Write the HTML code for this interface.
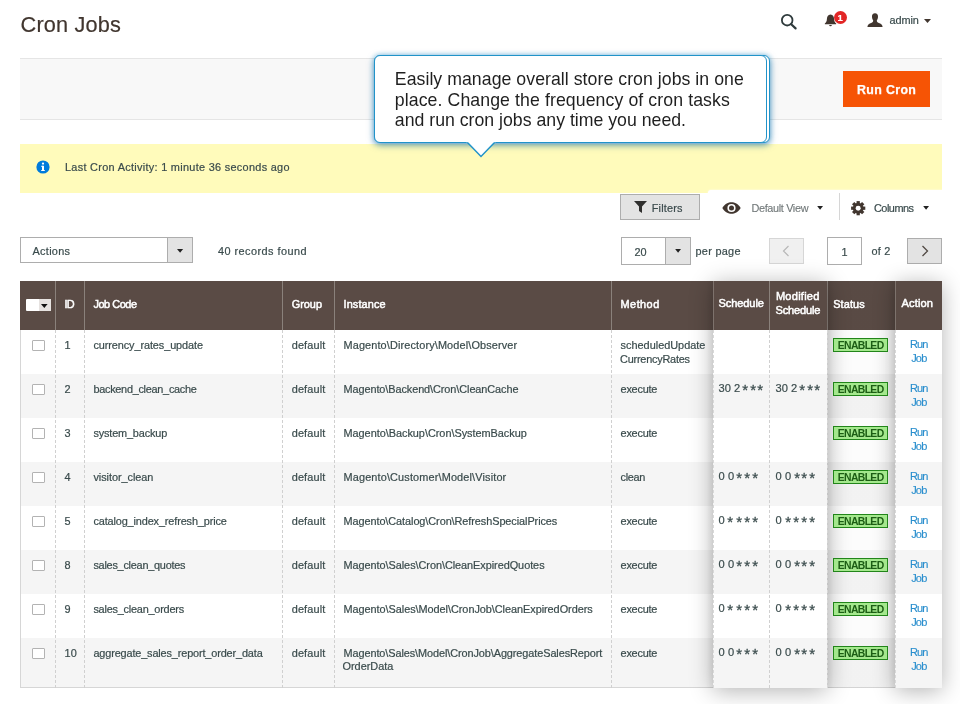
<!DOCTYPE html>
<html><head><meta charset="utf-8"><title>Cron Jobs</title>
<style>
*{box-sizing:border-box;margin:0;padding:0}
html,body{width:960px;height:704px;overflow:hidden;background:#fff}
body{font-family:"Liberation Sans",sans-serif;color:#46595a;position:relative;font-size:12px}
#wrap{position:absolute;left:0;top:0;width:960px;height:704px;will-change:transform}
.abs{position:absolute}
.t{position:absolute;white-space:nowrap;line-height:0;height:0;display:block;transform:translateY(-0.3465em)}
.b{font-size:10.9px;color:#3a4b4c;-webkit-text-stroke-width:0.2px}
.h{font-size:10.9px;color:#fff;-webkit-text-stroke:0.5px #fff}
.hz{font-size:11.1px;color:#fff;-webkit-text-stroke:0.5px #fff}
.l{font-size:11px;color:#2b8fce;-webkit-text-stroke-width:0.15px}
.e{font-size:10.4px;color:#1c5e14;font-weight:bold}
.tip{font-size:17.7px;color:#1f1f1f}
svg{position:absolute;overflow:visible}
.as{font-style:normal;display:inline-block;transform:translateY(0.1em) scale(1.35);transform-origin:50% 50%}
</style></head><body><div id="wrap">
<span class="t b" id="title" style="left:20.6px;top:33px;letter-spacing:0.182px;font-size:21.7px;color:#41362f;">Cron Jobs</span>
<svg style="left:779px;top:11px" width="20" height="20" viewBox="0 0 20 20"><circle cx="8.2" cy="9.2" r="5.3" fill="none" stroke="#2e3a3c" stroke-width="1.8"/><path d="M12.2 13.2 L16.6 17.4" stroke="#2e3a3c" stroke-width="2.2" stroke-linecap="round"/></svg>
<svg style="left:823.6px;top:14.4px" width="13" height="13" viewBox="0 0 14 14"><path d="M7 0.6 C4.2 0.8 3.2 3.2 3.1 5.6 C3 8 2.2 9.2 0.9 10.2 L0.9 11 L13.1 11 L13.1 10.2 C11.8 9.2 11 8 10.9 5.6 C10.8 3.2 9.8 0.8 7 0.6 Z" fill="#41362f"/><path d="M5.6 11.8 a1.4 1.4 0 0 0 2.8 0 Z" fill="#41362f"/></svg>
<div class="abs" style="left:833.5px;top:11.2px;width:13px;height:13px;border-radius:50%;background:#e22626"></div>
<span class="t b" id="badge" style="left:837.6px;top:21.2px;font-size:9.5px;font-weight:bold;color:#fff;">1</span>
<svg style="left:866.5px;top:12.8px" width="16" height="14.3" viewBox="0 0 17 15"><path d="M8.5 0.3 C6.3 0.3 5.2 1.9 5.3 4 C5.4 6 6 7.2 6.6 8 C6.6 9.4 6 9.9 4.4 10.5 C2.4 11.2 0.8 11.6 0.4 14.7 L16.6 14.7 C16.2 11.6 14.6 11.2 12.6 10.5 C11 9.9 10.4 9.4 10.4 8 C11 7.2 11.6 6 11.7 4 C11.8 1.9 10.7 0.3 8.5 0.3 Z" fill="#41362f"/></svg>
<span class="t b" id="admin" style="left:889.5px;top:24.2px;letter-spacing:-0.068px;">admin</span>
<svg style="left:924px;top:18.6px" width="7" height="4.4" viewBox="0 0 8 5"><path d="M0 0 L8 0 L4 4.6 Z" fill="#41362f"/></svg>
<div class="abs" style="left:20px;top:58px;width:921.6px;height:62px;background:#f8f8f8;border-top:1px solid #e5e5e5;border-bottom:1px solid #e5e5e5"></div>
<div class="abs" style="left:843px;top:71px;width:87px;height:35.5px;background:#f65405"></div>
<span class="t b" id="runcron" style="left:857px;top:94px;letter-spacing:0.352px;font-size:12.4px;font-weight:bold;color:#fff;-webkit-text-stroke:0.25px #fff;">Run Cron</span>
<div class="abs" style="left:20px;top:143.5px;width:921.6px;height:49.7px;background:#fffbbb"></div>
<svg style="left:36px;top:160px" width="14" height="14" viewBox="0 0 14 14"><circle cx="7" cy="7" r="6.6" fill="#007bdb"/><rect x="6" y="5.8" width="2" height="5" fill="#fff"/><rect x="5.2" y="5.8" width="2" height="1" fill="#fff"/><rect x="5.2" y="10" width="3.6" height="1" fill="#fff"/><circle cx="7" cy="3.6" r="1.15" fill="#fff"/></svg>
<span class="t b" id="lastcron" style="left:65px;top:171.3px;letter-spacing:0.300px;">Last Cron Activity: 1 minute 36 seconds ago</span>
<div class="abs" style="left:374px;top:55px;width:395.8px;height:88px;background:#fff;border:1.5px solid #2193c9;border-radius:6px;box-shadow:0 2px 7px rgba(10,95,150,.6),0 0 5px rgba(60,170,230,.45)"></div>
<div class="abs" style="left:374px;top:55px;width:392.8px;height:88px;background:#fff;border:1.5px solid #2193c9;border-radius:6px"></div>
<svg style="left:462px;top:140px" width="40" height="20" viewBox="0 0 40 20"><path d="M5 2 L19 16.5 L33 2" fill="#fff" stroke="#2193c9" stroke-width="1.5"/><rect x="4" y="0" width="30" height="2.2" fill="#fff"/></svg>
<span class="t tip" id="tip1" style="left:394.8px;top:84.8px;letter-spacing:0.045px;">Easily manage overall store cron jobs in one</span>
<span class="t tip" id="tip2" style="left:394.8px;top:105.6px;letter-spacing:0.091px;">place. Change the frequency of cron tasks</span>
<span class="t tip" id="tip3" style="left:394.8px;top:126.4px;letter-spacing:0.004px;">and run cron jobs any time you need.</span>
<div class="abs" style="left:708px;top:190px;width:236px;height:34px;background:#fff;border-top-left-radius:3px;box-shadow:0 0 2px rgba(255,255,255,.9)"></div>
<div class="abs" style="left:620px;top:194px;width:80px;height:26px;background:#e3e3e3;border:1px solid #adadad"></div>
<svg style="left:634px;top:201px" width="13" height="12" viewBox="0 0 13 12"><path d="M0 0 L13 0 L8 5.6 L8 12 L5 10 L5 5.6 Z" fill="#302f2e"/></svg>
<span class="t b" id="filters" style="left:651.7px;top:212px;letter-spacing:0.191px;color:#3b4a4c;">Filters</span>
<svg style="left:722px;top:201.5px" width="19" height="12" viewBox="0 0 19 12"><path d="M0.3 6 C3 1.6 6.2 0.3 9.5 0.3 C12.8 0.3 16 1.6 18.7 6 C16 10.4 12.8 11.7 9.5 11.7 C6.2 11.7 3 10.4 0.3 6 Z" fill="#41362f"/><circle cx="9.5" cy="6" r="4.1" fill="#fff"/><circle cx="9.5" cy="6" r="2.5" fill="#41362f"/></svg>
<span class="t b" id="defview" style="left:751.5px;top:212px;letter-spacing:-0.359px;color:#707778;-webkit-text-stroke-width:0.1px;">Default View</span>
<svg style="left:817px;top:206.3px" width="6.2" height="4.2" viewBox="0 0 7 5"><path d="M0 0 L7 0 L3.5 4.4 Z" fill="#222"/></svg>
<div class="abs" style="left:839px;top:193px;width:1px;height:27px;background:#d6d6d6"></div>
<svg style="left:851.3px;top:200.8px" width="14.4" height="14.4" viewBox="-7.5 -7.5 15 15"><g fill="#41362f"><rect x="-1.7" y="-7.4" width="3.4" height="4" transform="rotate(0)"/><rect x="-1.7" y="-7.4" width="3.4" height="4" transform="rotate(45)"/><rect x="-1.7" y="-7.4" width="3.4" height="4" transform="rotate(90)"/><rect x="-1.7" y="-7.4" width="3.4" height="4" transform="rotate(135)"/><rect x="-1.7" y="-7.4" width="3.4" height="4" transform="rotate(180)"/><rect x="-1.7" y="-7.4" width="3.4" height="4" transform="rotate(225)"/><rect x="-1.7" y="-7.4" width="3.4" height="4" transform="rotate(270)"/><rect x="-1.7" y="-7.4" width="3.4" height="4" transform="rotate(315)"/><circle r="5.6"/></g><circle r="2.6" fill="#fff"/></svg>
<span class="t b" id="columns" style="left:874px;top:212px;letter-spacing:-0.497px;">Columns</span>
<svg style="left:922.5px;top:206.3px" width="6.2" height="4.2" viewBox="0 0 7 5"><path d="M0 0 L7 0 L3.5 4.4 Z" fill="#222"/></svg>
<div class="abs" style="left:20px;top:237px;width:173px;height:26px;background:#fff;border:1px solid #adadad"></div>
<div class="abs" style="left:167px;top:238px;width:25px;height:24px;background:#e3e3e3;border-left:1px solid #adadad"></div>
<svg style="left:177px;top:248.7px" width="6.2" height="4.4" viewBox="0 0 7 5"><path d="M0 0 L7 0 L3.5 4.4 Z" fill="#222"/></svg>
<span class="t b" id="actions" style="left:32.5px;top:255px;letter-spacing:0.297px;">Actions</span>
<span class="t b" id="records" style="left:218px;top:255px;letter-spacing:0.451px;">40 records found</span>
<div class="abs" style="left:621px;top:237px;width:70px;height:28px;background:#fff;border:1px solid #adadad"></div>
<div class="abs" style="left:665px;top:238px;width:25px;height:26px;background:#e3e3e3;border-left:1px solid #adadad"></div>
<svg style="left:675px;top:248.8px" width="6.2" height="4.2" viewBox="0 0 7 5"><path d="M0 0 L7 0 L3.5 4.4 Z" fill="#222"/></svg>
<span class="t b" id="pp20" style="left:634.5px;top:256px;">20</span>
<span class="t b" id="perpage" style="left:695.5px;top:255px;letter-spacing:0.286px;">per page</span>
<div class="abs" style="left:769px;top:238px;width:35px;height:26px;background:#f0f0f0;border:1px solid #d6d6d6"></div>
<svg style="left:781px;top:245px" width="10" height="12" viewBox="0 0 10 12"><path d="M7.5 1 L2.5 6 L7.5 11" fill="none" stroke="#b8b8b8" stroke-width="1.2"/></svg>
<div class="abs" style="left:827px;top:237px;width:35px;height:28px;background:#fff;border:1px solid #adadad"></div>
<span class="t b" id="pg1" style="left:841.5px;top:256px;">1</span>
<span class="t b" id="of2" style="left:871.5px;top:255px;letter-spacing:0.209px;">of 2</span>
<div class="abs" style="left:907px;top:238px;width:35px;height:26px;background:#e3e3e3;border:1px solid #adadad"></div>
<svg style="left:920px;top:245px" width="10" height="12" viewBox="0 0 10 12"><path d="M2.5 1 L7.5 6 L2.5 11" fill="none" stroke="#514943" stroke-width="1.3"/></svg>
<div class="abs" style="left:20px;top:281px;width:921.6px;height:48.5px;background:#5a4b45"></div>
<div class="abs" style="left:20px;top:329.5px;width:921.6px;height:44.0px;background:#fff"></div>
<div class="abs" style="left:20px;top:373.5px;width:921.6px;height:44.0px;background:#f5f5f5"></div>
<div class="abs" style="left:20px;top:417.5px;width:921.6px;height:44.0px;background:#fff"></div>
<div class="abs" style="left:20px;top:461.5px;width:921.6px;height:44.0px;background:#f5f5f5"></div>
<div class="abs" style="left:20px;top:505.5px;width:921.6px;height:44.0px;background:#fff"></div>
<div class="abs" style="left:20px;top:549.5px;width:921.6px;height:44.0px;background:#f5f5f5"></div>
<div class="abs" style="left:20px;top:593.5px;width:921.6px;height:44.0px;background:#fff"></div>
<div class="abs" style="left:20px;top:637.5px;width:921.6px;height:50.5px;background:#f5f5f5"></div>
<div class="abs" style="left:20px;top:329.5px;width:1px;height:358.5px;background:#d6d6d6"></div>
<div class="abs" style="left:20px;top:687px;width:921.6px;height:1px;background:#d6d6d6"></div>
<div class="abs" style="left:827px;top:281px;width:68px;height:407px;background:linear-gradient(90deg,rgba(0,0,0,.07),rgba(0,0,0,.02) 10%,rgba(0,0,0,.01) 30%,rgba(0,0,0,.01) 70%,rgba(0,0,0,.02) 90%,rgba(0,0,0,.07))"></div>
<div class="abs" style="left:690px;top:281px;width:22.5px;height:407px;background:linear-gradient(90deg,rgba(0,0,0,0),rgba(0,0,0,.0) 70%,rgba(0,0,0,.05))"></div>
<div class="abs" style="left:55px;top:281px;width:1px;height:48.5px;background:#8a817b"></div>
<div class="abs" style="left:55px;top:329.5px;width:0;height:358.5px;border-left:1px dashed #d0d0d0"></div>
<div class="abs" style="left:84px;top:281px;width:1px;height:48.5px;background:#8a817b"></div>
<div class="abs" style="left:84px;top:329.5px;width:0;height:358.5px;border-left:1px dashed #d0d0d0"></div>
<div class="abs" style="left:282px;top:281px;width:1px;height:48.5px;background:#8a817b"></div>
<div class="abs" style="left:282px;top:329.5px;width:0;height:358.5px;border-left:1px dashed #d0d0d0"></div>
<div class="abs" style="left:334px;top:281px;width:1px;height:48.5px;background:#8a817b"></div>
<div class="abs" style="left:334px;top:329.5px;width:0;height:358.5px;border-left:1px dashed #d0d0d0"></div>
<div class="abs" style="left:611px;top:281px;width:1px;height:48.5px;background:#8a817b"></div>
<div class="abs" style="left:611px;top:329.5px;width:0;height:358.5px;border-left:1px dashed #d0d0d0"></div>
<div class="abs" style="left:712.5px;top:281px;width:1px;height:48.5px;background:#8a817b"></div>
<div class="abs" style="left:712.5px;top:329.5px;width:0;height:358.5px;border-left:1px dashed #d0d0d0"></div>
<div class="abs" style="left:769px;top:281px;width:1px;height:48.5px;background:#8a817b"></div>
<div class="abs" style="left:769px;top:329.5px;width:0;height:358.5px;border-left:1px dashed #d0d0d0"></div>
<div class="abs" style="left:827px;top:281px;width:1px;height:48.5px;background:#8a817b"></div>
<div class="abs" style="left:827px;top:329.5px;width:0;height:358.5px;border-left:1px dashed #d0d0d0"></div>
<div class="abs" style="left:894.5px;top:281px;width:1px;height:48.5px;background:#8a817b"></div>
<div class="abs" style="left:894.5px;top:329.5px;width:0;height:358.5px;border-left:1px dashed #d0d0d0"></div>
<div class="abs" style="left:712.5px;top:281px;width:114.5px;height:407px;box-shadow:0 3px 22px rgba(0,0,0,.30);background:#fff"></div>
<div class="abs" style="left:712.5px;top:281px;width:114.5px;height:48.5px;background:#5a4b45"></div>
<div class="abs" style="left:712.5px;top:329.5px;width:114.5px;height:44.0px;background:#fff"></div>
<div class="abs" style="left:712.5px;top:373.5px;width:114.5px;height:44.0px;background:#f5f5f5"></div>
<div class="abs" style="left:712.5px;top:417.5px;width:114.5px;height:44.0px;background:#fff"></div>
<div class="abs" style="left:712.5px;top:461.5px;width:114.5px;height:44.0px;background:#f5f5f5"></div>
<div class="abs" style="left:712.5px;top:505.5px;width:114.5px;height:44.0px;background:#fff"></div>
<div class="abs" style="left:712.5px;top:549.5px;width:114.5px;height:44.0px;background:#f5f5f5"></div>
<div class="abs" style="left:712.5px;top:593.5px;width:114.5px;height:44.0px;background:#fff"></div>
<div class="abs" style="left:712.5px;top:637.5px;width:114.5px;height:50.5px;background:#f5f5f5"></div>
<div class="abs" style="left:712.5px;top:281px;width:1px;height:48.5px;background:#7d726c"></div>
<div class="abs" style="left:769px;top:281px;width:1px;height:48.5px;background:#8a817b"></div>
<div class="abs" style="left:769px;top:329.5px;width:0;height:358.5px;border-left:1px dashed #d0d0d0"></div>
<div class="abs" style="left:894.5px;top:281px;width:47.10000000000002px;height:407px;box-shadow:0 3px 22px rgba(0,0,0,.30);background:#fff"></div>
<div class="abs" style="left:894.5px;top:281px;width:47.10000000000002px;height:48.5px;background:#5a4b45"></div>
<div class="abs" style="left:894.5px;top:329.5px;width:47.10000000000002px;height:44.0px;background:#fff"></div>
<div class="abs" style="left:894.5px;top:373.5px;width:47.10000000000002px;height:44.0px;background:#f5f5f5"></div>
<div class="abs" style="left:894.5px;top:417.5px;width:47.10000000000002px;height:44.0px;background:#fff"></div>
<div class="abs" style="left:894.5px;top:461.5px;width:47.10000000000002px;height:44.0px;background:#f5f5f5"></div>
<div class="abs" style="left:894.5px;top:505.5px;width:47.10000000000002px;height:44.0px;background:#fff"></div>
<div class="abs" style="left:894.5px;top:549.5px;width:47.10000000000002px;height:44.0px;background:#f5f5f5"></div>
<div class="abs" style="left:894.5px;top:593.5px;width:47.10000000000002px;height:44.0px;background:#fff"></div>
<div class="abs" style="left:894.5px;top:637.5px;width:47.10000000000002px;height:50.5px;background:#f5f5f5"></div>
<div class="abs" style="left:894.5px;top:281px;width:1px;height:48.5px;background:#7d726c"></div>
<div class="abs" style="left:712.5px;top:329.5px;width:0;height:358.5px;border-left:1px dashed #d8d8d8"></div>
<div class="abs" style="left:826.5px;top:329.5px;width:0;height:358.5px;border-left:1px dashed #d8d8d8"></div>
<div class="abs" style="left:894.5px;top:329.5px;width:0;height:358.5px;border-left:1px dashed #d8d8d8"></div>
<div class="abs" style="left:26px;top:299px;width:25px;height:12px;background:#fff;border-radius:1px"></div>
<div class="abs" style="left:38.5px;top:299px;width:12.5px;height:12px;background:#e6e2e0"></div>
<svg style="left:41.3px;top:304px" width="6.6" height="4" viewBox="0 0 7 4"><path d="M0 0 L7 0 L3.5 4 Z" fill="#111"/></svg>
<span class="t h" id="h_id" style="left:64.5px;top:308.3px;letter-spacing:-0.806px;">ID</span>
<span class="t h" id="h_job" style="left:93.4px;top:308.3px;letter-spacing:-0.432px;">Job Code</span>
<span class="t h" id="h_grp" style="left:291.7px;top:308.3px;letter-spacing:0.005px;">Group</span>
<span class="t h" id="h_ins" style="left:343.5px;top:308.3px;letter-spacing:0.118px;">Instance</span>
<span class="t h" id="h_met" style="left:620.6px;top:308.3px;letter-spacing:0.454px;">Method</span>
<span class="t hz" id="h_sch" style="left:718.5px;top:306.6px;letter-spacing:-0.124px;">Schedule</span>
<span class="t hz" id="h_mod1" style="left:775.9px;top:299.6px;letter-spacing:0.223px;">Modified</span>
<span class="t hz" id="h_mod2" style="left:775.5px;top:314.4px;letter-spacing:-0.181px;">Schedule</span>
<span class="t h" id="h_sta" style="left:833.2px;top:308.3px;letter-spacing:0.125px;">Status</span>
<span class="t hz" id="h_act" style="left:901.5px;top:306.6px;letter-spacing:0.131px;">Action</span>
<div class="abs" style="left:32px;top:339.5px;width:13px;height:11.5px;background:#fff;border:1px solid #b3b3b3;border-radius:1px"></div>
<span class="t b" id="r0_id" style="left:64.6px;top:349.2px;">1</span>
<span class="t b" id="r0_job" style="left:93.4px;top:349.2px;letter-spacing:-0.090px;">currency_rates_update</span>
<span class="t b" id="r0_grp" style="left:291.7px;top:349.2px;letter-spacing:0.149px;">default</span>
<span class="t b" id="r0_ins" style="left:343.5px;top:349.2px;letter-spacing:0.133px;">Magento\Directory\Model\Observer</span>
<span class="t b" id="r0_met" style="left:620.6px;top:349.2px;letter-spacing:0.001px;">scheduledUpdate</span>
<span class="t b" id="r0_met2" style="left:620px;top:363.2px;letter-spacing:-0.220px;">CurrencyRates</span>
<div class="abs" style="left:833px;top:338.2px;width:55px;height:13.6px;background:#a4e88d;border:1px solid #22851a"></div>
<span class="t e" id="r0_en" style="left:837.7px;top:349.5px;letter-spacing:-0.622px;">ENABLED</span>
<span class="t l" id="r0_run" style="left:910px;top:348.2px;letter-spacing:-0.844px;">Run</span>
<span class="t l" id="r0_jobl" style="left:911.2px;top:362.2px;letter-spacing:-0.825px;">Job</span>
<div class="abs" style="left:32px;top:383.5px;width:13px;height:11.5px;background:#fff;border:1px solid #b3b3b3;border-radius:1px"></div>
<span class="t b" id="r1_id" style="left:64.6px;top:393.2px;">2</span>
<span class="t b" id="r1_job" style="left:93.4px;top:393.2px;letter-spacing:-0.272px;">backend_clean_cache</span>
<span class="t b" id="r1_grp" style="left:291.7px;top:393.2px;letter-spacing:0.149px;">default</span>
<span class="t b" id="r1_ins" style="left:343.5px;top:393.2px;letter-spacing:-0.080px;">Magento\Backend\Cron\CleanCache</span>
<span class="t b" id="r1_met" style="left:620.6px;top:393.2px;letter-spacing:-0.243px;">execute</span>
<span class="t b" id="r1_s1" style="left:718.5px;top:392.2px;letter-spacing:0.043px;font-size:11.1px;">30 2 <i class="as">*</i> <i class="as">*</i> <i class="as">*</i></span>
<span class="t b" id="r1_s2" style="left:775.5px;top:392.2px;letter-spacing:0.043px;font-size:11.1px;">30 2 <i class="as">*</i> <i class="as">*</i> <i class="as">*</i></span>
<div class="abs" style="left:833px;top:382.2px;width:55px;height:13.6px;background:#a4e88d;border:1px solid #22851a"></div>
<span class="t e" id="r1_en" style="left:837.7px;top:393.5px;letter-spacing:-0.622px;">ENABLED</span>
<span class="t l" id="r1_run" style="left:910px;top:392.2px;letter-spacing:-0.844px;">Run</span>
<span class="t l" id="r1_jobl" style="left:911.2px;top:406.2px;letter-spacing:-0.825px;">Job</span>
<div class="abs" style="left:32px;top:427.5px;width:13px;height:11.5px;background:#fff;border:1px solid #b3b3b3;border-radius:1px"></div>
<span class="t b" id="r2_id" style="left:64.6px;top:437.2px;">3</span>
<span class="t b" id="r2_job" style="left:93.4px;top:437.2px;letter-spacing:-0.156px;">system_backup</span>
<span class="t b" id="r2_grp" style="left:291.7px;top:437.2px;letter-spacing:0.149px;">default</span>
<span class="t b" id="r2_ins" style="left:343.5px;top:437.2px;letter-spacing:-0.024px;">Magento\Backup\Cron\SystemBackup</span>
<span class="t b" id="r2_met" style="left:620.6px;top:437.2px;letter-spacing:-0.243px;">execute</span>
<div class="abs" style="left:833px;top:426.2px;width:55px;height:13.6px;background:#a4e88d;border:1px solid #22851a"></div>
<span class="t e" id="r2_en" style="left:837.7px;top:437.5px;letter-spacing:-0.622px;">ENABLED</span>
<span class="t l" id="r2_run" style="left:910px;top:436.2px;letter-spacing:-0.844px;">Run</span>
<span class="t l" id="r2_jobl" style="left:911.2px;top:450.2px;letter-spacing:-0.825px;">Job</span>
<div class="abs" style="left:32px;top:471.5px;width:13px;height:11.5px;background:#fff;border:1px solid #b3b3b3;border-radius:1px"></div>
<span class="t b" id="r3_id" style="left:64.6px;top:481.2px;">4</span>
<span class="t b" id="r3_job" style="left:93.4px;top:481.2px;letter-spacing:-0.046px;">visitor_clean</span>
<span class="t b" id="r3_grp" style="left:291.7px;top:481.2px;letter-spacing:0.149px;">default</span>
<span class="t b" id="r3_ins" style="left:343.5px;top:481.2px;letter-spacing:0.149px;">Magento\Customer\Model\Visitor</span>
<span class="t b" id="r3_met" style="left:620.6px;top:481.2px;letter-spacing:-0.337px;">clean</span>
<span class="t b" id="r3_s1" style="left:718.5px;top:480.2px;letter-spacing:0.107px;font-size:11.1px;">0 0 <i class="as">*</i> <i class="as">*</i> <i class="as">*</i></span>
<span class="t b" id="r3_s2" style="left:775.5px;top:480.2px;letter-spacing:0.157px;font-size:11.1px;">0 0 <i class="as">*</i> <i class="as">*</i> <i class="as">*</i></span>
<div class="abs" style="left:833px;top:470.2px;width:55px;height:13.6px;background:#a4e88d;border:1px solid #22851a"></div>
<span class="t e" id="r3_en" style="left:837.7px;top:481.5px;letter-spacing:-0.622px;">ENABLED</span>
<span class="t l" id="r3_run" style="left:910px;top:480.2px;letter-spacing:-0.844px;">Run</span>
<span class="t l" id="r3_jobl" style="left:911.2px;top:494.2px;letter-spacing:-0.825px;">Job</span>
<div class="abs" style="left:32px;top:515.5px;width:13px;height:11.5px;background:#fff;border:1px solid #b3b3b3;border-radius:1px"></div>
<span class="t b" id="r4_id" style="left:64.6px;top:525.2px;">5</span>
<span class="t b" id="r4_job" style="left:93.4px;top:525.2px;letter-spacing:-0.128px;">catalog_index_refresh_price</span>
<span class="t b" id="r4_grp" style="left:291.7px;top:525.2px;letter-spacing:0.149px;">default</span>
<span class="t b" id="r4_ins" style="left:343.5px;top:525.2px;letter-spacing:-0.073px;">Magento\Catalog\Cron\RefreshSpecialPrices</span>
<span class="t b" id="r4_met" style="left:620.6px;top:525.2px;letter-spacing:-0.243px;">execute</span>
<span class="t b" id="r4_s1" style="left:718.5px;top:524.2px;letter-spacing:0.335px;font-size:11.1px;">0 <i class="as">*</i> <i class="as">*</i> <i class="as">*</i> <i class="as">*</i></span>
<span class="t b" id="r4_s2" style="left:775.5px;top:524.2px;letter-spacing:0.385px;font-size:11.1px;">0 <i class="as">*</i> <i class="as">*</i> <i class="as">*</i> <i class="as">*</i></span>
<div class="abs" style="left:833px;top:514.2px;width:55px;height:13.6px;background:#a4e88d;border:1px solid #22851a"></div>
<span class="t e" id="r4_en" style="left:837.7px;top:525.5px;letter-spacing:-0.622px;">ENABLED</span>
<span class="t l" id="r4_run" style="left:910px;top:524.2px;letter-spacing:-0.844px;">Run</span>
<span class="t l" id="r4_jobl" style="left:911.2px;top:538.2px;letter-spacing:-0.825px;">Job</span>
<div class="abs" style="left:32px;top:559.5px;width:13px;height:11.5px;background:#fff;border:1px solid #b3b3b3;border-radius:1px"></div>
<span class="t b" id="r5_id" style="left:64.6px;top:569.2px;">8</span>
<span class="t b" id="r5_job" style="left:93.4px;top:569.2px;letter-spacing:-0.246px;">sales_clean_quotes</span>
<span class="t b" id="r5_grp" style="left:291.7px;top:569.2px;letter-spacing:0.149px;">default</span>
<span class="t b" id="r5_ins" style="left:343.5px;top:569.2px;letter-spacing:-0.048px;">Magento\Sales\Cron\CleanExpiredQuotes</span>
<span class="t b" id="r5_met" style="left:620.6px;top:569.2px;letter-spacing:-0.243px;">execute</span>
<span class="t b" id="r5_s1" style="left:718.5px;top:568.2px;letter-spacing:0.107px;font-size:11.1px;">0 0 <i class="as">*</i> <i class="as">*</i> <i class="as">*</i></span>
<span class="t b" id="r5_s2" style="left:775.5px;top:568.2px;letter-spacing:0.157px;font-size:11.1px;">0 0 <i class="as">*</i> <i class="as">*</i> <i class="as">*</i></span>
<div class="abs" style="left:833px;top:558.2px;width:55px;height:13.6px;background:#a4e88d;border:1px solid #22851a"></div>
<span class="t e" id="r5_en" style="left:837.7px;top:569.5px;letter-spacing:-0.622px;">ENABLED</span>
<span class="t l" id="r5_run" style="left:910px;top:568.2px;letter-spacing:-0.844px;">Run</span>
<span class="t l" id="r5_jobl" style="left:911.2px;top:582.2px;letter-spacing:-0.825px;">Job</span>
<div class="abs" style="left:32px;top:603.5px;width:13px;height:11.5px;background:#fff;border:1px solid #b3b3b3;border-radius:1px"></div>
<span class="t b" id="r6_id" style="left:64.6px;top:613.2px;">9</span>
<span class="t b" id="r6_job" style="left:93.4px;top:613.2px;letter-spacing:-0.221px;">sales_clean_orders</span>
<span class="t b" id="r6_grp" style="left:291.7px;top:613.2px;letter-spacing:0.149px;">default</span>
<span class="t b" id="r6_ins" style="left:343.5px;top:613.2px;letter-spacing:-0.045px;">Magento\Sales\Model\CronJob\CleanExpiredOrders</span>
<span class="t b" id="r6_met" style="left:620.6px;top:613.2px;letter-spacing:-0.243px;">execute</span>
<span class="t b" id="r6_s1" style="left:718.5px;top:612.2px;letter-spacing:0.335px;font-size:11.1px;">0 <i class="as">*</i> <i class="as">*</i> <i class="as">*</i> <i class="as">*</i></span>
<span class="t b" id="r6_s2" style="left:775.5px;top:612.2px;letter-spacing:0.385px;font-size:11.1px;">0 <i class="as">*</i> <i class="as">*</i> <i class="as">*</i> <i class="as">*</i></span>
<div class="abs" style="left:833px;top:602.2px;width:55px;height:13.6px;background:#a4e88d;border:1px solid #22851a"></div>
<span class="t e" id="r6_en" style="left:837.7px;top:613.5px;letter-spacing:-0.622px;">ENABLED</span>
<span class="t l" id="r6_run" style="left:910px;top:612.2px;letter-spacing:-0.844px;">Run</span>
<span class="t l" id="r6_jobl" style="left:911.2px;top:626.2px;letter-spacing:-0.825px;">Job</span>
<div class="abs" style="left:32px;top:647.5px;width:13px;height:11.5px;background:#fff;border:1px solid #b3b3b3;border-radius:1px"></div>
<span class="t b" id="r7_id" style="left:64.6px;top:657.2px;">10</span>
<span class="t b" id="r7_job" style="left:93.4px;top:657.2px;letter-spacing:-0.140px;">aggregate_sales_report_order_data</span>
<span class="t b" id="r7_grp" style="left:291.7px;top:657.2px;letter-spacing:0.149px;">default</span>
<span class="t b" id="r7_ins" style="left:343.5px;top:657.2px;letter-spacing:-0.084px;">Magento\Sales\Model\CronJob\AggregateSalesReport</span>
<span class="t b" id="r7_ins2" style="left:342.5px;top:670.0px;letter-spacing:-0.005px;">OrderData</span>
<span class="t b" id="r7_met" style="left:620.6px;top:657.2px;letter-spacing:-0.243px;">execute</span>
<span class="t b" id="r7_s1" style="left:718.5px;top:656.2px;letter-spacing:0.107px;font-size:11.1px;">0 0 <i class="as">*</i> <i class="as">*</i> <i class="as">*</i></span>
<span class="t b" id="r7_s2" style="left:775.5px;top:656.2px;letter-spacing:0.157px;font-size:11.1px;">0 0 <i class="as">*</i> <i class="as">*</i> <i class="as">*</i></span>
<div class="abs" style="left:833px;top:646.2px;width:55px;height:13.6px;background:#a4e88d;border:1px solid #22851a"></div>
<span class="t e" id="r7_en" style="left:837.7px;top:657.5px;letter-spacing:-0.622px;">ENABLED</span>
<span class="t l" id="r7_run" style="left:910px;top:656.2px;letter-spacing:-0.844px;">Run</span>
<span class="t l" id="r7_jobl" style="left:911.2px;top:670.2px;letter-spacing:-0.825px;">Job</span>
</div></body></html>
